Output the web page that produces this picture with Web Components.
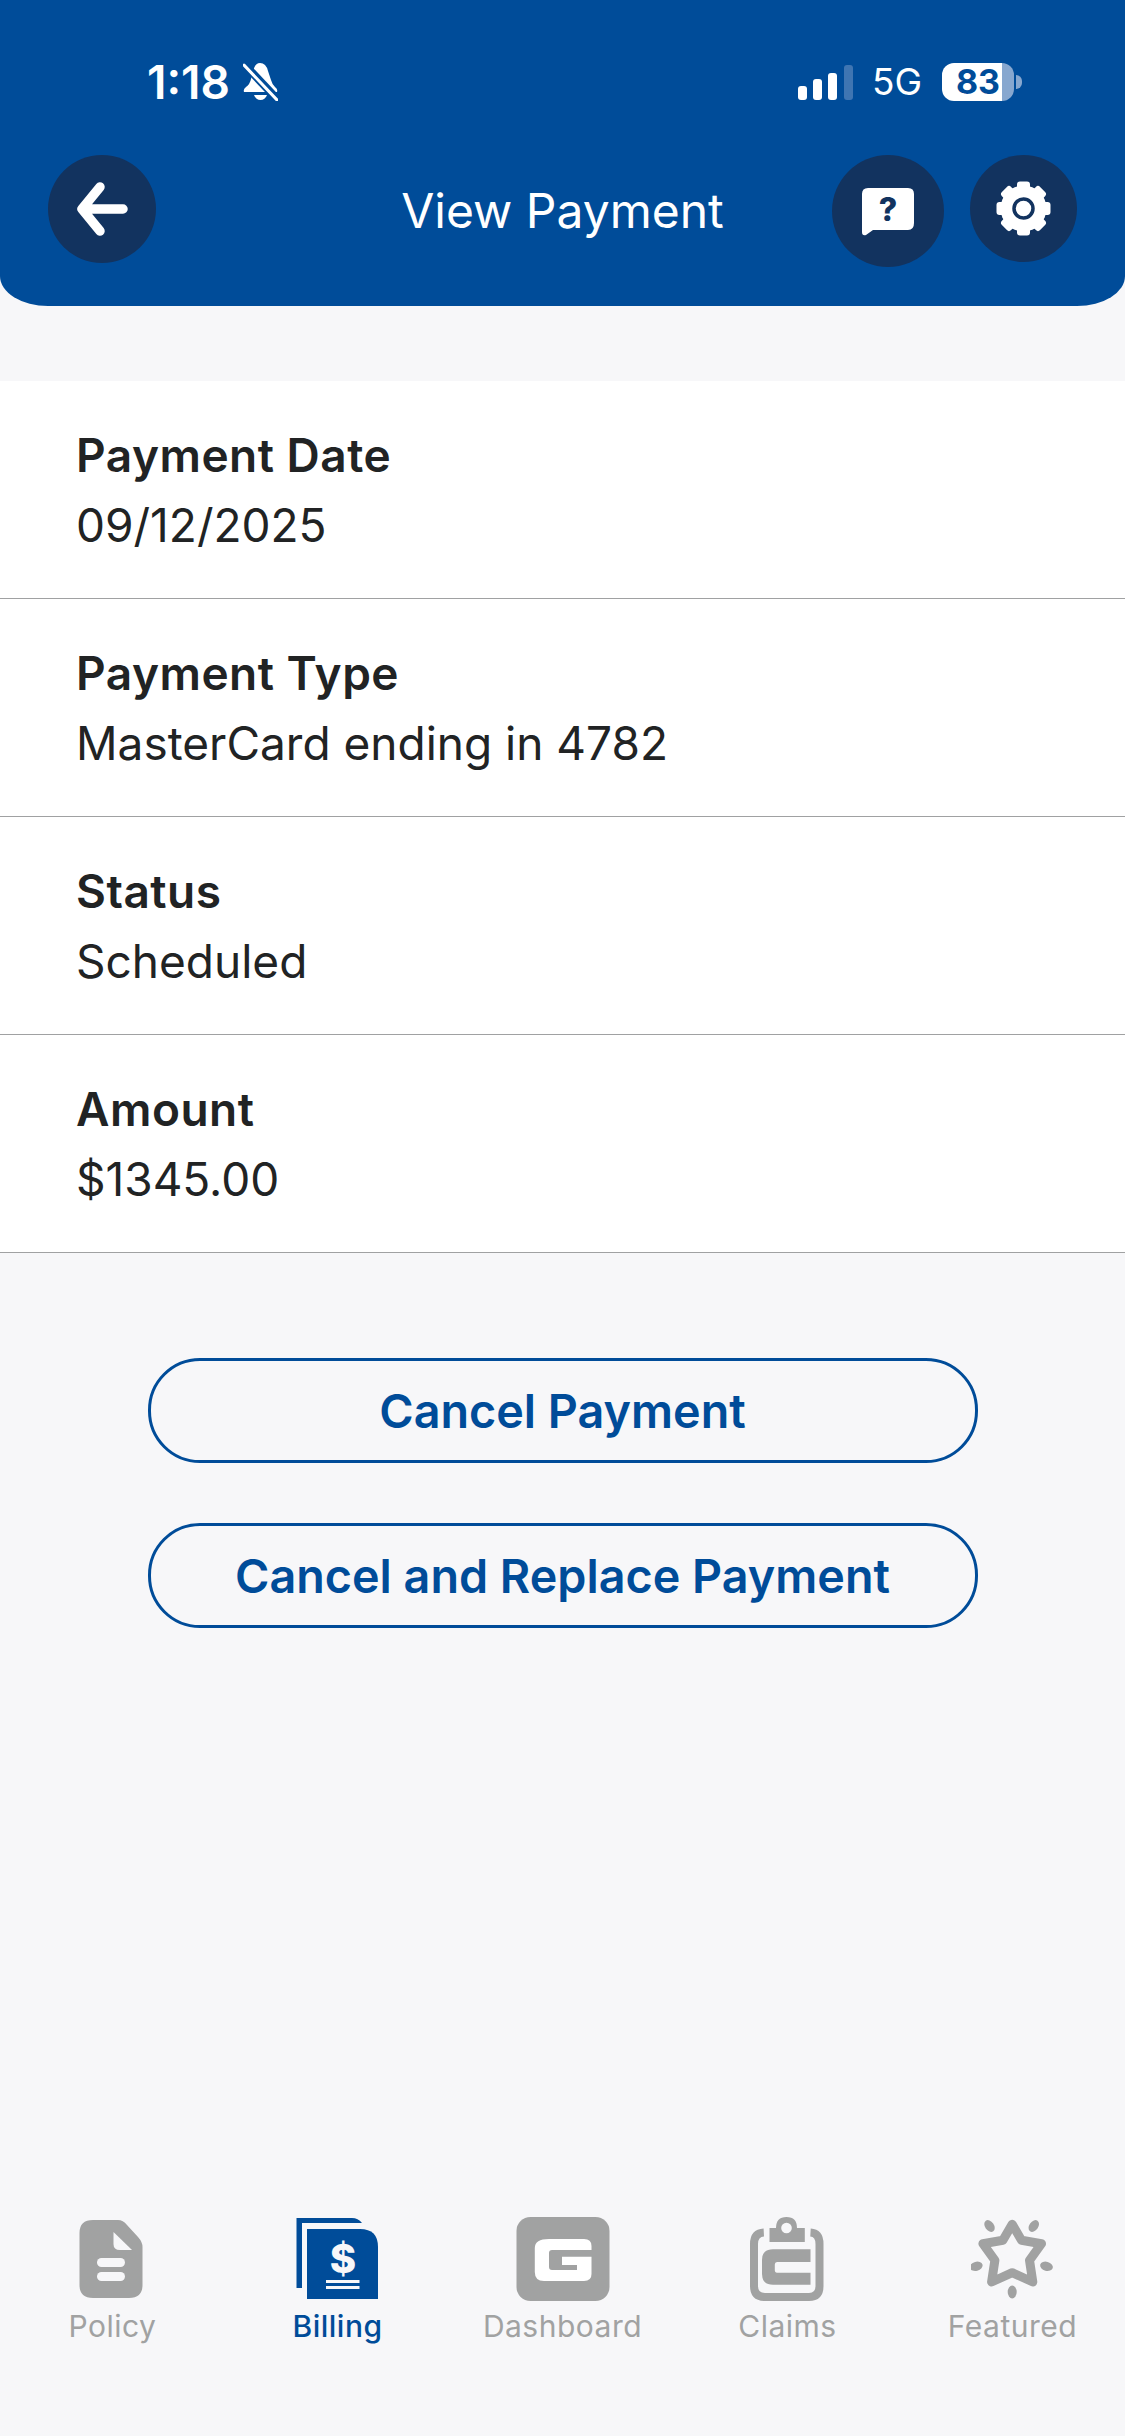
<!DOCTYPE html>
<html lang="en">
<head>
<meta charset="utf-8">
<title>View Payment</title>
<style>
  html, body { margin: 0; padding: 0; background: #f7f7f9; }
  body { font-family: Inter, "Liberation Sans", sans-serif; }
</style>
</head>
<body>
<payment-screen>
  <app-header slot="header" title="View Payment">
    <round-button slot="left" size="108,108">
      <svg width="108" height="108" viewBox="0 0 108 108"><path d="M75 54H35M52 32L34 54L52 76" fill="none" stroke="#fff" stroke-width="9.500" stroke-linecap="round" stroke-linejoin="round"/></svg>
    </round-button>
    <round-button slot="right" size="112,112">
      <svg width="112" height="112" viewBox="0 0 112 112"><path d="M36 33H76Q82 33 82 39V68Q82 75 76 75H41L34 80Q30 81 30 77V39Q30 33 36 33Z" fill="#fff"/><text x="56" y="66" text-anchor="middle" font-family="Inter, sans-serif" font-weight="800" font-size="32" fill="#12335f">?</text></svg>
    </round-button>
    <round-button slot="right" size="107,107">
      <svg width="107" height="107" viewBox="0 0 107 107">
        <g fill="#fff">
          <circle cx="53.5" cy="53.5" r="23"/>
          <rect x="47" y="26.500" width="13" height="54" rx="3"/>
          <rect x="47" y="26.500" width="13" height="54" rx="3" transform="rotate(45 53.5 53.5)"/>
          <rect x="47" y="26.500" width="13" height="54" rx="3" transform="rotate(90 53.5 53.5)"/>
          <rect x="47" y="26.500" width="13" height="54" rx="3" transform="rotate(135 53.5 53.5)"/>
        </g>
        <circle cx="53.5" cy="53.5" r="9.500" fill="#fff" stroke="#12335f" stroke-width="3.500"/>
      </svg>
    </round-button>
  </app-header>

  <detail-row label="Payment Date">09/12/2025</detail-row>
  <detail-row label="Payment Type">MasterCard ending in 4782</detail-row>
  <detail-row label="Status">Scheduled</detail-row>
  <detail-row label="Amount">$1345.00</detail-row>

  <outline-button slot="actions">Cancel Payment</outline-button>
  <outline-button slot="actions">Cancel and Replace Payment</outline-button>

  <tab-item slot="tabs" label="Policy">
    <svg width="84" height="84" viewBox="0 0 84 84"><path d="M47 3H22Q8.500 3 8.500 16V68Q8.500 81 22 81H58Q71.500 81 71.500 68V30Q71.500 25 67 20L56 8Q52 3 47 3Z" fill="#a1a2a2"/><path d="M42.500 15L61 33H49Q42.500 33 42.500 27Z" fill="#f7f7f9"/><rect x="26" y="41" width="28" height="9" rx="4.500" fill="#f7f7f9"/><rect x="26" y="55" width="28" height="9" rx="4.500" fill="#f7f7f9"/></svg>
  </tab-item>
  <tab-item slot="tabs" label="Billing" active>
    <svg width="84" height="84" viewBox="0 0 84 84"><path d="M0.500 1H56Q62 1 66 6H6V71H0.500Z" fill="#004c99"/><path d="M11 12H64Q82 12 82 30V82H11Z" fill="#004c99"/><text x="47" y="56" text-anchor="middle" font-family="Inter, sans-serif" font-weight="800" font-size="40" fill="#f7f7f9">$</text><rect x="30" y="63" width="33.500" height="3" fill="#f7f7f9"/><rect x="30" y="69" width="33.500" height="3" fill="#f7f7f9"/></svg>
  </tab-item>
  <tab-item slot="tabs" label="Dashboard">
    <svg width="94" height="84" viewBox="0 0 94 84"><rect x="0.500" y="0" width="93" height="84" rx="14" fill="#a1a2a2"/><path d="M33 22H68Q75.500 22 75.500 29V33H36Q33 33 33 36V50Q33 53 36 53H61V48H46V39.700H75.500V57Q75.500 64 68 64H28Q18.800 64 18.800 55V31Q18.800 22 33 22Z" fill="#fff"/></svg>
  </tab-item>
  <tab-item slot="tabs" label="Claims">
    <svg width="74" height="84" viewBox="0 0 74 84" style="overflow: visible">
      <path d="M12.800 15.500Q3 16 3 27V69Q3 80 14 80H58Q68.500 80 68.500 69V27Q68.500 16 59.500 15.500" fill="none" stroke="#a1a2a2" stroke-width="8"/>
      <path d="M18.500 25V11H25Q25 0 35.500 0Q46 0 46 11H53.800V25Z" fill="#a1a2a2"/><circle cx="35.500" cy="11" r="5.300" fill="#f7f7f9"/>
      <path d="M59.500 32.300H22Q11 32.300 11 43V57Q11 67.700 22 67.700H59.500V55.700H26Q23.800 55.700 23.800 53V47.500Q23.800 45 26 45H59.500Z" fill="#a1a2a2"/>
    </svg>
  </tab-item>
  <tab-item slot="tabs" label="Featured">
    <svg width="84" height="84" viewBox="0 0 84 84">
      <path d="M41.200 7.300L50.500 23.300L70.500 26.700L58.500 43.300L61.800 65L41.200 55.700L20.600 65L23.900 43.300L11.900 26.700L31.900 23.300Z" fill="none" stroke="#a1a2a2" stroke-width="9" stroke-linejoin="round"/>
      <g fill="#a1a2a2">
        <ellipse cx="18.500" cy="9" rx="4.500" ry="6.500" transform="rotate(-35 18.500 9)"/>
        <ellipse cx="62.800" cy="9" rx="4.500" ry="6.500" transform="rotate(35 62.800 9)"/>
        <ellipse cx="5.200" cy="49.300" rx="6.500" ry="4.500" transform="rotate(-15 5.200 49.300)"/>
        <ellipse cx="75.500" cy="49.300" rx="6.500" ry="4.500" transform="rotate(15 75.500 49.300)"/>
        <ellipse cx="41.200" cy="75" rx="4.500" ry="6.500"/>
      </g>
    </svg>
  </tab-item>
</payment-screen>

<script>
// small helper so each element just declares its css + markup
function shadow(el, html) {
  el.attachShadow({ mode: 'open' });
  el.shadowRoot.innerHTML = html;
}

class PaymentScreen extends HTMLElement {
  constructor() {
    super();
    shadow(this, `
      <style>
        :host { display: flex; flex-direction: column; height: 2436px; background: #f7f7f9; color: #212324; }
        .list { display: block; margin-top: 75px; background: #fff; }
        .actions { display: flex; flex-direction: column; align-items: center; gap: 60px; margin-top: 105px; }
        .tabs { display: grid; grid-template-columns: repeat(5, 1fr); margin-top: auto; padding-bottom: 92px; }
      </style>
      <slot name="header"></slot>
      <div class="list"><slot></slot></div>
      <div class="actions"><slot name="actions"></slot></div>
      <div class="tabs"><slot name="tabs"></slot></div>
    `);
  }
}

class StatusBar extends HTMLElement {
  constructor() {
    super();
    shadow(this, `
      <style>
        :host { display: flex; align-items: center; justify-content: space-between; height: 44px; padding: 60px 103px 0 147px; color: #fff; }
        .left, .right { display: flex; align-items: center; }
        .time { font-size: 46px; font-weight: 600; line-height: 44px; }
        .left svg { margin-left: 13px; }
        .net { font-size: 37px; font-weight: 400; margin: 0 20px 0 19px; line-height: 44px; }
        .battery { display: flex; align-items: center; justify-content: center; width: 72px; height: 38px; border-radius: 12px; background: linear-gradient(90deg, #fff 0 83%, #87a7cf 83%); color: #004c99; font-size: 34px; font-weight: 700; line-height: 38px; }
        .tip { width: 6px; height: 14px; margin-left: 2px; background: #87a7cf; border-radius: 0 6px 6px 0; }
      </style>
      <div class="left">
        <span class="time">1:18</span>
        <svg width="35" height="38" viewBox="0 0 35 38">
          <path d="M17 0Q23 0 25 8L28 17Q29 21 32 24Q35 26 34 29H1Q0 26 3 24Q7 21 8 16L10 8Q12 0 17 0Z" fill="#fff"/>
          <path d="M11 32H24Q22 37 17.500 37Q13 37 11 32Z" fill="#fff"/>
          <path d="M0 0L36 38" stroke="#004c99" stroke-width="8"/>
          <path d="M1 2L34 37" stroke="#fff" stroke-width="3" stroke-linecap="round"/>
        </svg>
      </div>
      <div class="right">
        <svg width="55" height="35" viewBox="0 0 55 35">
          <rect x="0" y="21" width="9" height="14" rx="3" fill="#fff"/>
          <rect x="15" y="14" width="9" height="21" rx="3" fill="#fff"/>
          <rect x="30" y="8" width="9" height="27" rx="3" fill="#fff"/>
          <rect x="46" y="0" width="9" height="35" rx="3" fill="#3f75b2"/>
        </svg>
        <span class="net">5G</span>
        <span class="battery">83</span><span class="tip"></span>
      </div>
    `);
  }
}

class AppHeader extends HTMLElement {
  constructor() {
    super();
    shadow(this, `
      <style>
        :host { display: block; height: 306px; background: #004c99; border-radius: 0 0 48px 48px / 0 0 30px 30px; color: #fff; }
        .nav { display: grid; grid-template-columns: 1fr auto 1fr; align-items: start; height: 112px; margin-top: 51px; padding: 0 48px; }
        .title { align-self: center; font-size: 48px; font-weight: 400; line-height: 60px; }
        .right { display: flex; align-items: flex-start; justify-content: flex-end; gap: 26px; }
        .left { display: flex; }
      </style>
      <status-bar></status-bar>
      <div class="nav">
        <div class="left"><slot name="left"></slot></div>
        <div class="title"></div>
        <div class="right"><slot name="right"></slot></div>
      </div>
    `);
    this.shadowRoot.querySelector('.title').textContent = this.getAttribute('title');
  }
}

class RoundButton extends HTMLElement {
  constructor() {
    super();
    const [w, h] = this.getAttribute('size').split(',');
    shadow(this, `
      <style>
        :host { display: flex; width: ${w}px; height: ${h}px; border-radius: 50%; background: #12335f; }
        ::slotted(svg) { display: block; }
      </style>
      <slot></slot>
    `);
  }
}

class DetailRow extends HTMLElement {
  constructor() {
    super();
    shadow(this, `
      <style>
        :host { display: block; padding: 39px 76px 38px; border-bottom: 1px solid #a0a1a2; font-size: 46px; line-height: 70px; }
        .label { font-weight: 600; letter-spacing: 0.5px; }
      </style>
      <div class="label"></div>
      <div><slot></slot></div>
    `);
    this.shadowRoot.querySelector('.label').textContent = this.getAttribute('label');
  }
}

class OutlineButton extends HTMLElement {
  constructor() {
    super();
    shadow(this, `
      <style>
        :host { display: flex; align-items: center; justify-content: center; box-sizing: border-box; width: 830px; height: 105px; border: 3px solid #004c99; border-radius: 52px; color: #004c99; font-size: 46.7px; font-weight: 600; }
      </style>
      <slot></slot>
    `);
  }
}

class TabItem extends HTMLElement {
  constructor() {
    super();
    shadow(this, `
      <style>
        :host { display: flex; flex-direction: column; align-items: center; gap: 7px; color: #a1a2a2; }
        :host([active]) { color: #004c99; font-weight: 500; }
        ::slotted(svg) { display: block; }
        .label { font-size: 30px; line-height: 36px; letter-spacing: 0.5px; }
      </style>
      <slot></slot>
      <div class="label"></div>
    `);
    this.shadowRoot.querySelector('.label').textContent = this.getAttribute('label');
  }
}

customElements.define('status-bar', StatusBar);
customElements.define('round-button', RoundButton);
customElements.define('app-header', AppHeader);
customElements.define('detail-row', DetailRow);
customElements.define('outline-button', OutlineButton);
customElements.define('tab-item', TabItem);
customElements.define('payment-screen', PaymentScreen);
</script>
</body>
</html>
